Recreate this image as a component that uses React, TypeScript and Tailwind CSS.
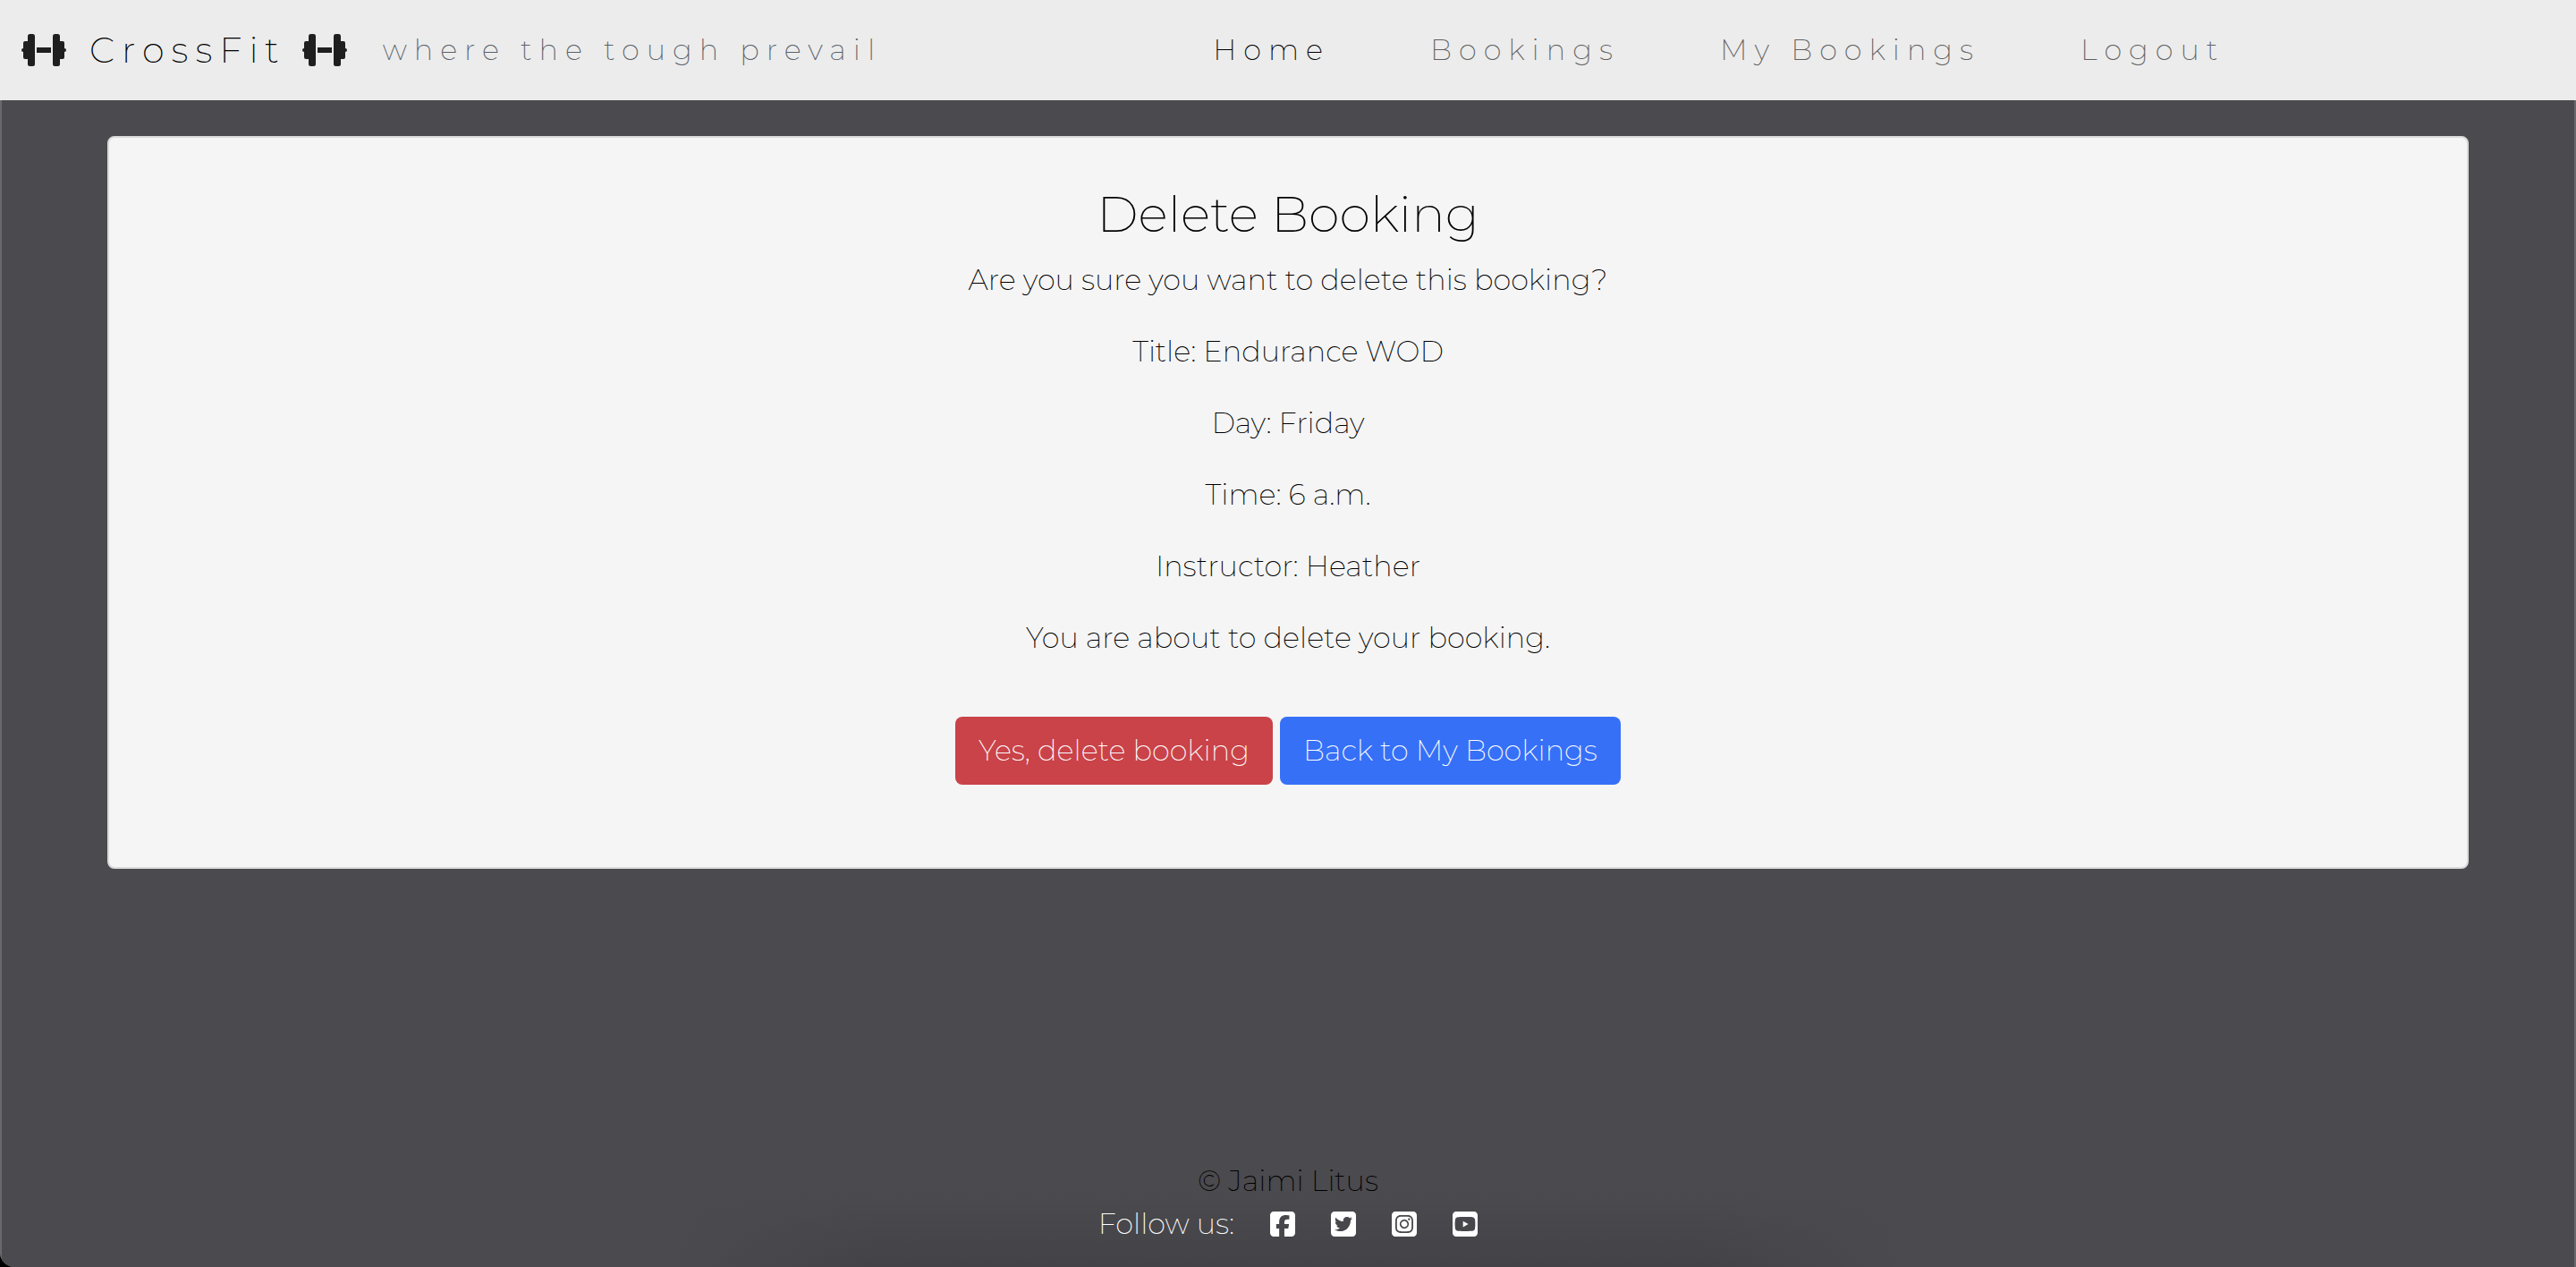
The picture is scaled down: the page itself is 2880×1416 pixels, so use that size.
import { FaSquareFacebook, FaSquareInstagram, FaSquareTwitter, FaSquareYoutube } from "react-icons/fa6";

function Dumbbell() {
  return (
    <svg viewBox="0 0 50 36" className="h-9 w-[50px] shrink-0" fill="#1f1f1f" aria-hidden="true">
      <rect x="7" y="0" width="8" height="36" rx="2.5" />
      <rect x="2" y="8" width="9" height="20" rx="2" />
      <rect x="0" y="16" width="5" height="4" rx="2" />
      <rect x="35" y="0" width="8" height="36" rx="2.5" />
      <rect x="39" y="8" width="9" height="20" rx="2" />
      <rect x="45" y="16" width="5" height="4" rx="2" />
      <rect x="17" y="15" width="16" height="6" />
    </svg>
  );
}

const links = [
  { label: "Home", active: true },
  { label: "Bookings", active: false },
  { label: "My Bookings", active: false },
  { label: "Logout", active: false },
];

const details = [
  "Are you sure you want to delete this booking?",
  "Title: Endurance WOD",
  "Day: Friday",
  "Time: 6 a.m.",
  "Instructor: Heather",
  "You are about to delete your booking.",
];

const socials = [
  { label: "Facebook", Icon: FaSquareFacebook },
  { label: "Twitter", Icon: FaSquareTwitter },
  { label: "Instagram", Icon: FaSquareInstagram },
  { label: "YouTube", Icon: FaSquareYoutube },
];

export default function App() {
  return (
    <div className="min-h-screen bg-black">
      <div className="flex min-h-screen flex-col overflow-hidden rounded-bl-[16px] bg-[#4b4a4e] font-['Montserrat','Inter',sans-serif] text-[32px] leading-[48px] font-extralight text-black">
        <header className="flex h-28 items-center bg-[#ececec] pl-6">
          <a href="#" className="flex items-center text-[40px] tracking-[8px] text-black">
            <Dumbbell />
            <span className="mr-[18px] ml-[26px]">CrossFit</span>
            <Dumbbell />
          </a>
          <span className="ml-10 tracking-[8px] text-[#586069]">where the tough prevail</span>
          <nav className="mr-[13.75%] ml-auto flex gap-28 tracking-[8px]">
            {links.map(({ label, active }) => (
              <a key={label} href="#" className={active ? "text-black" : "text-[#606060]"}>
                {label}
              </a>
            ))}
          </nav>
        </header>

        <div className="flex grow flex-col border-x-2 border-[#69686c]">
          <main className="mx-[118px] mt-10 flex flex-col items-center rounded-lg border-2 border-[#dadada] bg-[#f5f5f5] pt-[52px] pb-[92px]">
            <h1 className="mb-4 text-[56px] leading-[67px] font-extralight">Delete Booking</h1>
            {details.map((line) => (
              <p key={line} className="mb-8">
                {line}
              </p>
            ))}
            <div className="mt-8 flex gap-2 text-white">
              <button type="button" className="h-[76px] rounded-lg bg-[#c94349] px-[26px]">
                Yes, delete booking
              </button>
              <button type="button" className="h-[76px] rounded-lg bg-[#3670f7] px-[26px]">
                Back to My Bookings
              </button>
            </div>
          </main>

          <footer className="mt-auto bg-[linear-gradient(90deg,#4b4a4e_26%,transparent_34%,transparent_66%,#4b4a4e_74%),linear-gradient(180deg,#4b4a4e_40%,#434246)] pt-5 pb-6">
            <p className="text-center">© Jaimi Litus</p>
            <div className="flex items-center justify-center text-white">
              <span className="mr-10">Follow us:</span>
              <div className="flex gap-10">
                {socials.map(({ label, Icon }) => (
                  <a key={label} href="#" aria-label={label}>
                    <Icon className="h-8 w-7" />
                  </a>
                ))}
              </div>
            </div>
          </footer>
        </div>
      </div>
    </div>
  );
}
